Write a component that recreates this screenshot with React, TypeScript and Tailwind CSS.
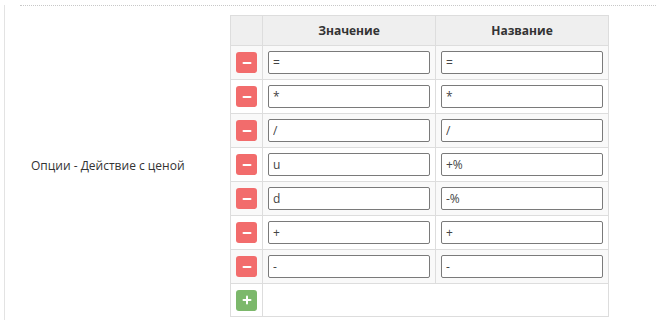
import { Minus, Plus } from 'lucide-react';

const rows = [
  { value: '=', name: '=' },
  { value: '*', name: '*' },
  { value: '/', name: '/' },
  { value: 'u', name: '+%' },
  { value: 'd', name: '-%' },
  { value: '+', name: '+' },
  { value: '-', name: '-' },
];

function OptionRow({ value, name, striped }: { value: string; name: string; striped: boolean }) {
  return (
    <tr className={striped ? 'bg-[#f9f9f9]' : 'bg-white'}>
      <td className="border border-[#dddddd] p-[5px] align-middle">
        <button
          type="button"
          className="flex h-[21px] w-[21px] items-center justify-center rounded-[3px] bg-[#f26c6c]"
        >
          <Minus className="h-3 w-3 text-white" strokeWidth={4} />
        </button>
      </td>
      <td className="border border-[#dddddd] p-[5px]">
        <input
          defaultValue={value}
          className="block h-[23px] w-full rounded-[2px] border border-[#7a7a7a] bg-white px-[4px] text-[12px] text-[#444] outline-none"
        />
      </td>
      <td className="border border-[#dddddd] p-[5px]">
        <input
          defaultValue={name}
          className="block h-[23px] w-full rounded-[2px] border border-[#7a7a7a] bg-white px-[4px] text-[12px] text-[#444] outline-none"
        />
      </td>
    </tr>
  );
}

export default function App() {
  return (
    <div className="h-[320px] w-[661px] bg-white pl-1 font-['Open_Sans',sans-serif] text-[#333]">
      <div className="h-full border-l border-[#e3e3e3] pl-[15px] pr-[5px]">
        <div className="border-t border-dotted border-[#c8c8c8] mt-[5px]" />

        <div className="mt-[9px] flex items-center">
          <div className="w-[210px] pl-[11px] text-[12px]">Опции - Действие с ценой</div>

          <table className="w-[379px] border-collapse border border-[#dddddd]">
            <thead>
              <tr className="bg-[#efefef] text-[12px] font-bold">
                <th className="h-[30px] w-[32px] border border-[#dddddd]" />
                <th className="w-[173px] border border-[#dddddd]">Значение</th>
                <th className="border border-[#dddddd]">Название</th>
              </tr>
            </thead>
            <tbody>
              {rows.map((r, i) => (
                <OptionRow key={r.value} value={r.value} name={r.name} striped={i % 2 === 0} />
              ))}
              <tr className="bg-white">
                <td className="h-[33px] border border-[#dddddd] p-[5px]">
                  <button
                    type="button"
                    className="flex h-[21px] w-[21px] items-center justify-center rounded-[3px] bg-[#7cb86b]"
                  >
                    <Plus className="h-3 w-3 text-white" strokeWidth={4} />
                  </button>
                </td>
                <td className="border border-[#dddddd]" colSpan={2} />
              </tr>
            </tbody>
          </table>
        </div>
      </div>
    </div>
  );
}
